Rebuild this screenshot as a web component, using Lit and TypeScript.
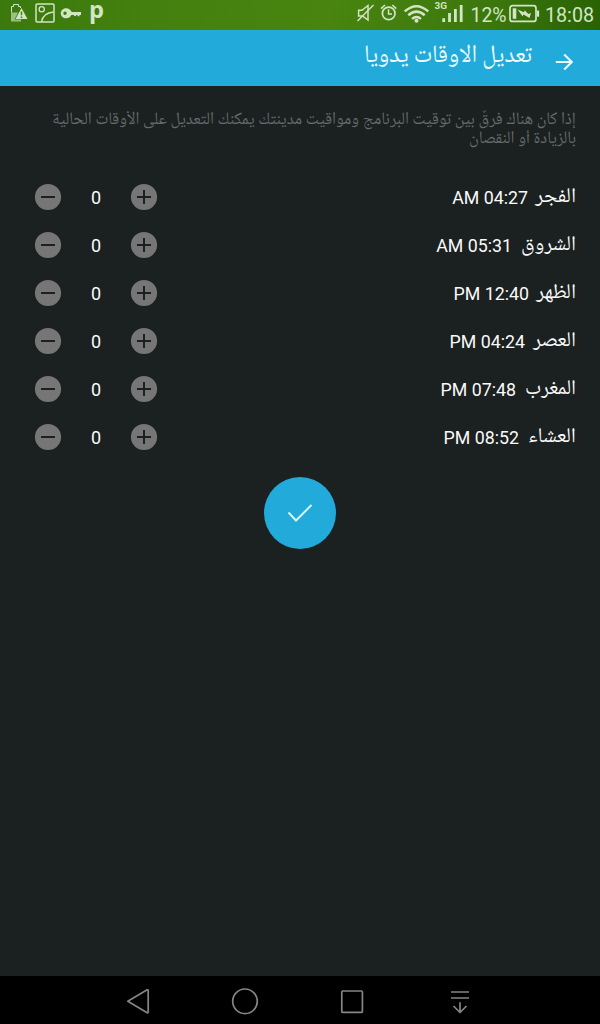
import { LitElement, html, css } from "lit";
import { customElement, state } from "lit/decorators.js";

interface Prayer { name: string; time: string; width: number; box: number; }

@customElement("fitted-text")
class FittedText extends LitElement {
  static properties = {
    text: {}, width: { type: Number }, size: { type: Number }, height: { type: Number }, baseline: { type: Number },
  };
  declare text: string;
  declare width: number;
  declare size: number;
  declare height: number;
  declare baseline: number;
  static styles = css`
    :host { display: block; flex: none; }
    svg { display: block; overflow: visible; }
    text { fill: currentColor; font-family: "Noto Naskh Arabic UI", "Noto Naskh Arabic", "Noto Sans Arabic", "DejaVu Sans", sans-serif; direction: rtl; }
  `;
  render() {
    return html`<svg width=${this.width} height=${this.height}>
      <text x=${this.width} y=${this.baseline} font-size=${this.size} textLength=${this.width} lengthAdjust="spacingAndGlyphs">${this.text}</text>
    </svg>`;
  }
}

@customElement("app-root")
class AppRoot extends LitElement {
  @state() prayers: Prayer[] = [
    { name: "الفجر", time: "AM 04:27", width: 41, box: 48 },
    { name: "الشروق", time: "AM 05:31", width: 55, box: 64 },
    { name: "الظهر", time: "PM 12:40", width: 40, box: 47 },
    { name: "العصر", time: "PM 04:24", width: 43, box: 51 },
    { name: "المغرب", time: "PM 07:48", width: 51, box: 60 },
    { name: "العشاء", time: "PM 08:52", width: 48, box: 57 },
  ];
  @state() offsets = [0, 0, 0, 0, 0, 0];

  static styles = css`
    :host { display: flex; flex-direction: column; width: 600px; height: 1024px; background: #1b2020; color: #fafafa; font-family: Roboto, sans-serif; overflow: hidden; }
    svg { display: block; flex: none; }
    .status { height: 30px; flex: none; display: flex; justify-content: space-between; background: linear-gradient(100deg, #3b790d 0%, #43800f 25%, #48840f 55%, #3d780e 80%, #286204 100%); color: #d2e5c4; }
    .bar { height: 56px; flex: none; box-sizing: border-box; background: #21aada; display: flex; direction: rtl; align-items: flex-start; padding-right: 24px; color: #e9fbff; }
    .title { margin-right: 20px; }
    .main { flex: 1; direction: rtl; padding: 24px 24px 0; display: flex; flex-direction: column; }
    .note { height: 63px; color: #666a6a; }
    .row { height: 48px; display: flex; align-items: center; }
    .name { flex: none; }
    .time { direction: ltr; font-size: 17.8px; line-height: 24px; padding-top: 1px; white-space: nowrap; }
    .stepper { margin-right: auto; display: grid; direction: ltr; grid-template-columns: 48px 48px 48px; align-items: center; justify-items: center; }
    .value { font-size: 18px; line-height: 24px; padding-top: 1px; }
    button { border: 0; padding: 0; background: none; display: block; }
    .done { width: 72px; height: 72px; border-radius: 50%; background: #21aada; margin: 16px auto 0; display: grid; place-items: center; }
    .nav { height: 48px; flex: none; background: #000; }
    .sys { font-family: Roboto, sans-serif; fill: #d2e5c4; }
  `;

  private shift(i: number, d: number) {
    this.offsets = this.offsets.map((v, n) => (n === i ? v + d : v));
  }

  private round(plus: boolean, i: number) {
    return html`<button @click=${() => this.shift(i, plus ? 1 : -1)}>
      <svg width="28" height="28"><circle cx="14" cy="14" r="13.1" fill="#777676" />
        <path d=${plus ? "M7 14H21M14 7V21" : "M7 14H21"} stroke="#1b2020" stroke-width="2" /></svg>
    </button>`;
  }

  render() {
    return html`
      <div class="status">
        <svg width="110" height="30" fill="none" stroke="#d2e5c4">
          <path d="M11.5 12.5V6.5H13.5V4.5H18.5V6.5H20.5V8" stroke-width="1" />
          <path d="M11 12.5H18L14.5 19.5H21V21.5H11Z" fill="#9dbf80" stroke="none" />
          <path d="M21.5 8L27.5 19H15.5Z" fill="#d2e5c4" stroke="none" />
          <path d="M21.5 11.5V15.3M21.5 16.5V18" stroke="#47800f" stroke-width="1.5" />
          <rect x="36" y="4" width="18" height="18" rx="1.2" stroke-width="1.5" />
          <circle cx="41.7" cy="9.2" r="2.6" stroke-width="1.3" />
          <path d="M41.5 22C42.5 16 47 12.5 53.5 12" stroke-width="1.4" />
          <path fill-rule="evenodd" d="M66 8.2C69 8.2 70.8 10 71.6 12H81V15H79.5V16.2H77.5V15H76V16H74V15H71.4C70.5 17 68.5 18.3 66 18.3C63 18.3 60.8 16 60.8 13.3S63 8.2 66 8.2ZM65 11.6A1.7 1.7 0 1 0 65 15A1.7 1.7 0 1 0 65 11.6Z" fill="#d2e5c4" stroke="none" />
          <text x="89" y="18" font-size="22.5" font-weight="700" stroke="none" fill="#d2e5c4" font-family="Open Sans, sans-serif" textLength="15" lengthAdjust="spacingAndGlyphs">p</text>
        </svg>
        <svg width="250" height="30" fill="none" stroke="#d2e5c4">
          <path d="M8.6 10.3H12L18 5.5V20L12.5 16H8.6Z" stroke-width="1.5" />
          <path d="M7.5 21L23.5 5" stroke-width="1.5" />
          <circle cx="38.7" cy="13.4" r="6.3" stroke-width="1.7" />
          <path d="M38.5 9.3V14H42M31 8.6L35 5M46.3 8.6L42.3 5" stroke-width="1.5" />
          <path d="M54.7 11.4Q66.5 1 78.3 11.4M58.3 15.3Q66.5 8 74.7 15.3M62 18.9Q66.5 15.2 71 18.9" stroke-width="2.5" />
          <circle cx="66.5" cy="20.8" r="2" fill="#d2e5c4" stroke="none" />
          <text class="sys" x="84.5" y="8.7" font-size="9" font-weight="700" stroke="none" textLength="12.5" lengthAdjust="spacingAndGlyphs">3G</text>
          <path d="M93.7 22V18.3M99.5 22V13M105.4 22V9M111.2 22V5" stroke-width="2.8" />
          <text class="sys" x="120.5" y="22" font-size="20" stroke="none" textLength="36" lengthAdjust="spacingAndGlyphs">12%</text>
          <rect x="160" y="5.7" width="26" height="15.7" rx="2.5" stroke-width="1.7" />
          <path d="M188 10.5V16.7" stroke-width="2.2" />
          <path d="M162.7 8.3H166.3V18.8H162.7Z" fill="#d2e5c4" stroke="none" />
          <path d="M167.5 9.5L174 12.3L174.8 10.2L178.2 14L181 13L179.5 18L173.5 14.6L172.6 16.2Z" fill="#d2e5c4" stroke="none" />
          <text class="sys" x="195" y="22" font-size="20" stroke="none" textLength="49" lengthAdjust="spacingAndGlyphs">18:08</text>
        </svg>
      </div>
      <div class="bar">
        <svg width="24" height="56" fill="none" stroke="currentColor" stroke-width="2.1"><path d="M3.8 32H19M12.2 24.4L19.8 32L12.2 39.6" /></svg>
        <fitted-text class="title" .text=${"تعديل الاوقات يدويا"} .width=${168} .size=${25} .height=${56} .baseline=${35}></fitted-text>
      </div>
      <div class="main">
        <div class="note">
          <fitted-text .text=${"إذا كان هناك فرقٌ بين توقيت البرنامج ومواقيت مدينتك يمكنك التعديل على الأوقات الحالية"} .width=${524} .size=${17.5} .height=${19} .baseline=${16}></fitted-text>
          <fitted-text .text=${"بالزيادة أو النقصان"} .width=${107} .size=${17.5} .height=${19} .baseline=${16}></fitted-text>
        </div>
        ${this.prayers.map((p, i) => html`
          <div class="row">
            <div class="name" style="width:${p.box}px">
              <fitted-text .text=${p.name} .width=${p.width} .size=${21} .height=${24} .baseline=${19.5}></fitted-text>
            </div>
            <span class="time">${p.time}</span>
            <div class="stepper">${this.round(false, i)}<span class="value">${this.offsets[i]}</span>${this.round(true, i)}</div>
          </div>`)}
        <button class="done"><svg width="28" height="24" fill="none" stroke="#d8f5fc" stroke-width="2"><path d="M2.5 11.5L10 19.5L25.5 4" /></svg></button>
      </div>
      <div class="nav">
        <svg width="600" height="48" fill="none" stroke="#858585" stroke-width="1.7" stroke-linejoin="round">
          <path d="M127.8 25.3L147.2 13.8Q148.2 13.6 148.2 14.5V36Q148.2 37 147.2 36.8Z" />
          <circle cx="245" cy="25.3" r="12.3" />
          <rect x="341.8" y="15" width="20.6" height="21.4" rx="1" />
          <path d="M451 16H469M451 22H469M460 26.3V36.5M453.5 30L460 36.5L466.5 30" />
        </svg>
      </div>`;
  }
}
